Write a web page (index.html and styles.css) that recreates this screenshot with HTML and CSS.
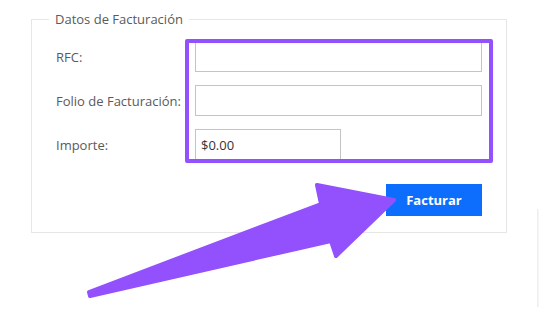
FILE: index.html
```html
<!DOCTYPE html>
<html lang="es">
<head>
    <meta charset="UTF-8">
    <meta name="viewport" content="width=device-width, initial-scale=1.0">
    <title>Datos de Facturación</title>
    <link rel="stylesheet" href="styles.css">
</head>
<body>
    <div class="page">
        <fieldset class="billing">
            <legend>Datos de Facturación</legend>

            <div class="form-grid">
                <label for="rfc">RFC:</label>
                <input type="text" id="rfc">

                <label for="folio">Folio de Facturación:</label>
                <input type="text" id="folio">

                <label for="importe">Importe:</label>
                <input type="text" id="importe" class="short" value="$0.00">
            </div>

            <div class="actions">
                <button type="button">Facturar</button>
            </div>
        </fieldset>

        <!-- anotaciones encima del formulario -->
        <div class="highlight"></div>
        <svg class="arrow" width="539" height="328" viewBox="0 0 539 328">
            <polygon points="89,292 321,204 317,185 394,200 336,256 331,241 90,296"
                     fill="#9350fd" stroke="#9350fd" stroke-width="4" stroke-linejoin="round"/>
        </svg>
        <div class="edge"></div>
    </div>
</body>
</html>
```

FILE: styles.css
```css
/* base */
body {
    margin: 0;
    font-family: 'Open Sans', 'Noto Sans', sans-serif;
    color: #5a5a5a;
    background-color: #ffffff;
}

.page {
    position: relative;
    width: 539px;
    height: 328px;
    overflow: hidden;
}

.billing {
    position: relative;
    top: 10px;
    margin: 0 0 0 31px;
    width: 476px;
    box-sizing: border-box;
    border: 1px solid #e6e6e6;
    padding: 13px 24px 16px 24px;
}

.billing legend {
    font-size: 13px;
    margin-left: -7px;
    padding: 0 6px;
    color: #5a5a5a;
}

.form-grid {
    display: grid;
    grid-template-columns: 139px 1fr;
    row-gap: 13px;
    align-items: center;
}

.form-grid label {
    font-size: 13px;
}

.form-grid input {
    height: 31px;
    box-sizing: border-box;
    border: 1px solid #c4c4c4;
    padding: 0 5px;
    font-family: inherit;
    font-size: 13px;
    color: #333;
    outline: none;
}

.form-grid input.short {
    width: 146px;
}

.actions {
    display: flex;
    justify-content: flex-end;
    margin-top: 24px;
}

button {
    width: 96px;
    height: 32px;
    border: none;
    background-color: #0d6efd;
    color: #ffffff;
    font-family: inherit;
    font-size: 13px;
    font-weight: bold;
    cursor: pointer;
}

.highlight {
    position: absolute;
    left: 185px;
    top: 39px;
    width: 308px;
    height: 124px;
    box-sizing: border-box;
    border: 4px solid #9350fd;
    border-radius: 2px;
    pointer-events: none;
}

.arrow {
    position: absolute;
    left: 0;
    top: 0;
    pointer-events: none;
}

.edge {
    position: absolute;
    left: 537px;
    top: 209px;
    width: 2px;
    height: 98px;
    background: linear-gradient(to right, #ececec, #f7f7f7);
}
```
